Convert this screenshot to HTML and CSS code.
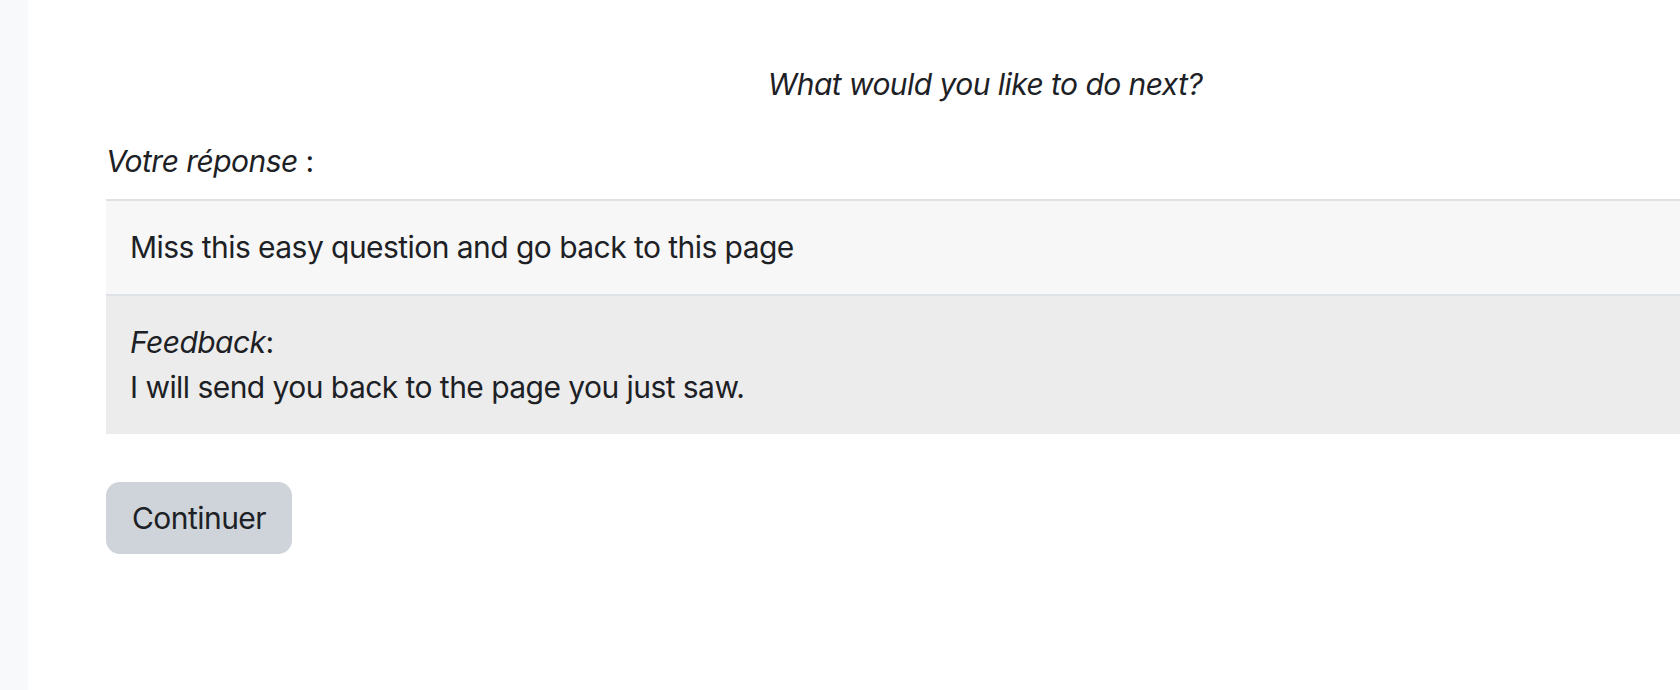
FILE: index.html
```html
<!DOCTYPE html>
<html lang="fr">
<head>
  <meta charset="UTF-8">
  <meta name="viewport" content="width=device-width, initial-scale=1.0">
  <title>Leçon</title>
  <link rel="stylesheet" href="styles.css">
</head>
<body>
  <div class="page">
    <aside class="drawer"></aside>
    <main class="content">
      <p class="question"><em>What would you like to do next?</em></p>

      <div class="response-label"><em>Votre réponse</em> :</div>
      <table class="response">
        <tr class="answer">
          <td>Miss this easy question and go back to this page</td>
        </tr>
        <tr class="feedback">
          <td><em>Feedback</em>:<br>I will send you back to the page you just saw.</td>
        </tr>
      </table>

      <form class="actions">
        <button type="button" class="btn">Continuer</button>
      </form>
    </main>
  </div>
</body>
</html>
```

FILE: styles.css
```css
body {
  font-family: Inter, "Noto Sans", sans-serif;
  font-size: 30px;
  line-height: 45px;
  letter-spacing: -0.55px;
  margin: 0;
  padding: 0;
  color: #1d2125;
  background: #fff;
}

.page {
  display: flex;
  min-height: 690px;
}

.drawer {
  flex: 0 0 28px;
  background-color: #f8f9fa;
}

.content {
  flex: 1;
  padding: 62px 0 0 78px;
}

.question {
  margin: 0 0 32px;
  padding-left: 184px;
  text-align: center;
}

.response-label {
  margin-bottom: 15px;
}

.response {
  width: 100%;
  border-collapse: collapse;
}

.response td {
  padding: 24px;
  border-top: 2px solid #dee2e6;
}

.answer td {
  background-color: #f7f7f7;
}

.feedback td {
  background-color: #ececec;
}

.actions {
  margin-top: 48px;
}

.btn {
  font-family: inherit;
  font-size: 30px;
  line-height: 45px;
  letter-spacing: -0.55px;
  color: #1d2125;
  background-color: #ced4da;
  padding: 14px 26px 13px;
  border: 0;
  border-radius: 14px;
  cursor: pointer;
}
```
